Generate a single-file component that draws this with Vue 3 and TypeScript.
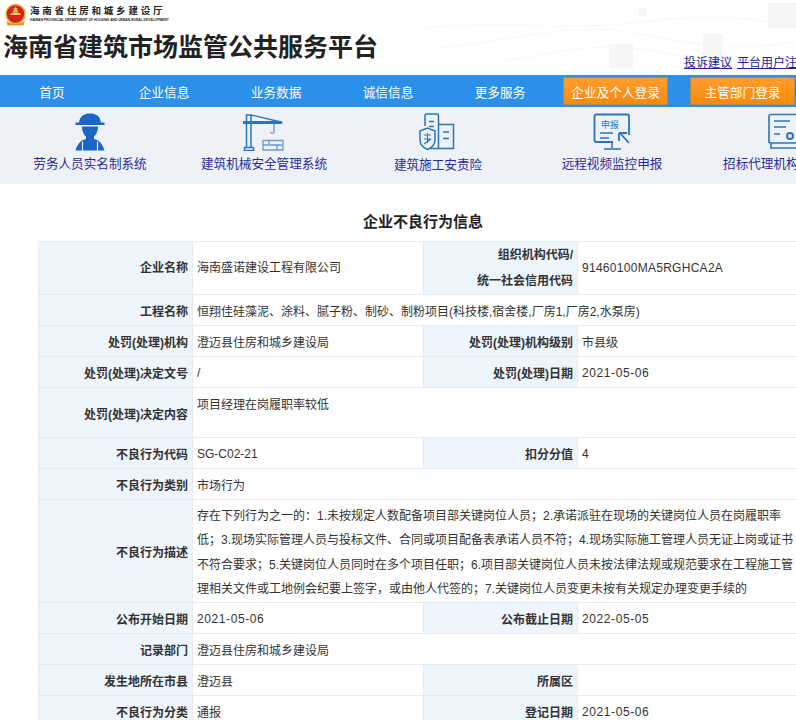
<script setup lang="ts">
interface Row {
  l1: string
  v1: string
  l2?: string
  v2?: string
  cls?: string
}
const navs = ['首页', '企业信息', '业务数据', '诚信信息', '更多服务']
const desc = '存在下列行为之一的：1.未按规定人数配备项目部关键岗位人员；2.承诺派驻在现场的关键岗位人员在岗履职率低；3.现场实际管理人员与投标文件、合同或项目配备表承诺人员不符；4.现场实际施工管理人员无证上岗或证书不符合要求；5.关键岗位人员同时在多个项目任职；6.项目部关键岗位人员未按法律法规或规范要求在工程施工管理相关文件或工地例会纪要上签字，或由他人代签的；7.关键岗位人员变更未按有关规定办理变更手续的'
const rows: Row[] = [
  { l1: '工程名称', v1: '恒翔佳硅藻泥、涂料、腻子粉、制砂、制粉项目(科技楼,宿舍楼,厂房1,厂房2,水泵房)' },
  { l1: '处罚(处理)机构', v1: '澄迈县住房和城乡建设局', l2: '处罚(处理)机构级别', v2: '市县级' },
  { l1: '处罚(处理)决定文号', v1: '/', l2: '处罚(处理)日期', v2: '2021-05-06' },
  { l1: '处罚(处理)决定内容', v1: '项目经理在岗履职率较低', cls: 'content' },
  { l1: '不良行为代码', v1: 'SG-C02-21', l2: '扣分分值', v2: '4' },
  { l1: '不良行为类别', v1: '市场行为' },
  { l1: '不良行为描述', v1: desc, cls: 'desc' },
  { l1: '公布开始日期', v1: '2021-05-06', l2: '公布截止日期', v2: '2022-05-05' },
  { l1: '记录部门', v1: '澄迈县住房和城乡建设局' },
  { l1: '发生地所在市县', v1: '澄迈县', l2: '所属区', v2: '' },
  { l1: '不良行为分类', v1: '通报', l2: '登记日期', v2: '2021-05-06' }
]
// 日期的数字比正文宽一点
const isDate = (v?: string) => /^\d{4}-\d{2}-\d{2}$/.test(v ?? '')
</script>

<template>
  <div class="page">
    <header class="top">
      <svg class="decor" width="796" height="75" viewBox="0 0 796 75">
        <g fill="#f6f6f8">
          <rect x="609" y="44" width="24" height="24" />
          <rect x="703" y="34" width="20" height="24" />
          <rect x="768" y="3" width="28" height="25" />
          <rect x="639" y="8" width="7" height="8" />
        </g>
        <g fill="none" stroke="#f7f8fa" stroke-width="1">
          <path d="M420 28C520 20 560 30 620 24S720 12 796 26" />
          <path d="M440 48C520 40 570 20 640 34S740 50 796 42" />
          <path d="M500 62C560 52 600 40 660 52S740 66 796 58" />
        </g>
      </svg>
      <div class="brand">
        <svg class="emblem" width="24" height="25" viewBox="0 0 24 25">
          <circle cx="12.5" cy="11" r="9.5" fill="#d6231c" stroke="#e6b23c" stroke-width="1.6" />
          <path d="M7 12h11l-1.2-2H8.200zM9.500 9.500h6L14.500 7.500h-4z" fill="#f2c94c" />
          <path d="M12.500 3.500l.8 1.800 1.700.2-1.300 1.100.4 1.600-1.600-.9-1.600.9.4-1.600-1.300-1.100 1.700-.2z" fill="#f6d75a" />
          <path d="M3.500 18q9 6 18 0l-1 4.500H4.500z" fill="#d89a2b" />
        </svg>
        <div class="brand-text">
          <div class="cn">海南省住房和城乡建设厅</div>
          <div class="en">HAINAN PROVINCIAL DEPARTMENT OF HOUSING AND URBAN-RURAL DEVELOPMENT</div>
        </div>
      </div>
      <div class="title-row">
        <h1>海南省建筑市场监管公共服务平台</h1>
        <div class="links">
          <a href="#">投诉建议</a>
          <a href="#">平台用户注册</a>
        </div>
      </div>
    </header>

    <nav class="nav">
      <ul>
        <li v-for="n in navs" :key="n">{{ n }}</li>
      </ul>
      <button class="login">企业及个人登录</button>
      <button class="login second">主管部门登录</button>
    </nav>

    <div class="systems">
      <div class="sys">
        <svg width="34" height="38" viewBox="0 0 34 38">
          <path d="M6 9.500C7 3 11 .5 17 .5S27 3 28 9.500h3.500v2.500H2.500V9.500z" fill="#1a66c4" />
          <path d="M9 13.500h16c0 5-2 8.500-4 10v2.500c4 1 8 3 10.500 11.500H2.500C5 29 9 27 13 26v-2.500c-2-1.500-4-5-4-10z" fill="#1a66c4" />
          <path d="M9.500 28.500v9M24.500 28.500v9" stroke="#eef2f6" stroke-width="1.200" />
        </svg>
        <span>劳务人员实名制系统</span>
      </div>
      <div class="sys">
        <svg width="42" height="38" viewBox="0 0 42 38" fill="none" stroke="#2a74c0">
          <path d="M3.500 9V34M8 9V34M1.500 34.500h9V37.500h-9zM4 2h3L6 2M3.500 9V2h4.500v7" stroke-width="1.500" />
          <path d="M8 2L38 9" stroke-width="1.300" />
          <path d="M1 9.500H38" stroke-width="3" stroke-linecap="round" />
          <path d="M31 11v7.500c0 2.500-3 2.500-3.500 .5" stroke-width="1" />
          <path d="M20 27.500h20v9.500H20zM20 32h20M26 27.500v4.500M34 32v5" stroke="#6b9bd0" stroke-width="1.300" />
        </svg>
        <span>建筑机械安全管理系统</span>
      </div>
      <div class="sys">
        <svg width="40" height="38" viewBox="0 0 40 38" fill="none" stroke="#2a74c0" stroke-width="1.500">
          <path d="M7 13V2.500Q7 1 8.500 1H19Q20.500 1 20.500 2.500V36" />
          <path d="M20.500 11.500H35.500V35.500H12M11 8.500h5M11 13.500h5M25 19h6M25 25.500h6" />
          <path d="M2 18l7.500-3 7.500 3v9c0 5-4 8-7.500 9.500C6 35 2 32 2 27z" />
          <path d="M6 22h7M6 26h7M9.500 20v10M6 31l7-5" stroke-width="1.100" />
        </svg>
        <span class="drop">建筑施工安责险</span>
      </div>
      <div class="sys">
        <svg width="38" height="38" viewBox="0 0 38 38" fill="none" stroke="#2a74c0" stroke-width="1.500">
          <path d="M20 29H3.500Q1.500 29 1.500 27V3.500Q1.500 1.500 3.500 1.500H34Q36 1.500 36 3.500V22" stroke-width="1.800" />
          <path d="M7 20h13M7 25h9M19 29v6M11 36H28" />
          <path d="M27 20L36 30M26 20v8M26 20h8" stroke-width="1.800" />
          <text x="8" y="15" class="box-text">申报</text>
        </svg>
        <span class="up">远程视频监控申报</span>
      </div>
      <div class="sys">
        <svg width="40" height="38" viewBox="0 0 40 38" fill="none" stroke="#2a74c0" stroke-width="1.600">
          <path d="M3 30V3.500Q3 1.500 5 1.500H38V30H5Q3 30 3 28M5 30v5H40" />
          <path d="M8 8H24M8 14H20M8 21H14" />
          <circle cx="24" cy="23" r="3" stroke-width="2" />
        </svg>
        <span class="up">招标代理机构管理系统</span>
      </div>
    </div>

    <main class="main">
      <h2>企业不良行为信息</h2>
      <table>
        <colgroup>
          <col class="label-col" />
          <col class="value-col" />
          <col class="label-col" />
          <col class="value-col" />
        </colgroup>
        <tbody>
          <tr class="first">
            <th>企业名称</th>
            <td>海南盛诺建设工程有限公司</td>
            <th>组织机构代码/<br />统一社会信用代码</th>
            <td class="code">91460100MA5RGHCA2A</td>
          </tr>
          <tr v-for="r in rows" :key="r.l1" :class="r.cls">
            <th>{{ r.l1 }}</th>
            <td :colspan="r.l2 ? 1 : 3" :class="{ date: isDate(r.v1) }">{{ r.v1 }}</td>
            <template v-if="r.l2">
              <th>{{ r.l2 }}</th>
              <td :class="{ date: isDate(r.v2) }">{{ r.v2 }}</td>
            </template>
          </tr>
        </tbody>
      </table>
    </main>
  </div>
</template>

<style scoped>
.page {
  width: 846px;
  font-family: "Liberation Sans", "Noto Sans CJK SC", sans-serif;
  font-size: 12px;
  color: #333;
}
.top {
  position: relative;
  width: 796px;
  height: 75px;
  overflow: visible;
}
.decor {
  position: absolute;
  top: 0;
  left: 0;
}
.brand {
  position: relative;
  display: flex;
  align-items: flex-start;
  padding: 3px 0 0 3px;
  height: 28px;
  box-sizing: border-box;
}
.brand-text {
  margin-left: 3px;
  padding-top: 2px;
}
.cn {
  font-size: 9.5px;
  line-height: 12px;
  font-weight: 700;
  letter-spacing: 2.8px;
  color: #222;
}
.en {
  font-size: 3.3px;
  line-height: 6px;
  font-weight: 700;
  white-space: nowrap;
  color: #222;
}
.title-row {
  position: relative;
  display: flex;
  justify-content: space-between;
  padding-left: 3px;
  width: 846px;
  box-sizing: border-box;
}
h1 {
  margin: 0;
  font-size: 25px;
  line-height: 38px;
  font-weight: 700;
  color: #222;
}
.links {
  padding-top: 27px;
  line-height: 16px;
  white-space: nowrap;
  margin-right: 37px;
}
.links a {
  color: #22229c;
  margin-left: 5px;
}
.nav {
  display: flex;
  align-items: center;
  height: 32px;
  width: 846px;
  background: #2b90ea;
}
.nav ul {
  display: flex;
  list-style: none;
  margin: 0 0 0 -4px;
  padding: 0;
  width: 567px;
}
.nav li {
  width: 112px;
  text-align: center;
  color: #fff;
  font-size: 12.7px;
}
.login {
  width: 105px;
  height: 28px;
  padding: 0;
  border: 1px solid #a98a55;
  background: linear-gradient(#ff9d2e, #f68a12);
  color: #fff;
  font: inherit;
  font-size: 12.7px;
}
.second {
  margin-left: 22px;
}
.systems {
  display: flex;
  height: 77px;
  width: 888px;
  padding-left: 3px;
  box-sizing: border-box;
  background: #eef2f6;
}
.sys {
  flex: 0 0 174px;
  display: flex;
  flex-direction: column;
  align-items: center;
  padding-top: 6px;
  box-sizing: border-box;
}
.sys span {
  margin-top: 3px;
  line-height: 20px;
  font-size: 12.6px;
  color: #2a2a9c;
  white-space: nowrap;
}
.sys span.drop {
  margin-top: 4px;
}
.box-text {
  font-size: 9px;
  fill: #2a74c0;
  stroke: none;
}
.main {
  width: 846px;
}
h2 {
  margin: 0;
  padding-top: 27px;
  height: 57px;
  box-sizing: border-box;
  line-height: 22px;
  text-align: center;
  font-size: 15px;
  font-weight: 700;
  color: #222;
}
table {
  margin-left: 38px;
  width: 770px;
  table-layout: fixed;
  border-collapse: collapse;
}
.label-col,
.value-col {
  width: 154px;
}
.value-col {
  width: 231px;
}
th,
td {
  height: 31px;
  padding: 1px 4px 0;
  border: 1px solid #e8ebef;
  box-sizing: border-box;
  font-size: 12px;
}
th {
  background: #eef5fc;
  text-align: right;
  font-weight: 700;
  color: #333;
}
.first th,
.first td {
  height: 53px;
  padding-top: 0;
  line-height: 26px;
}
.content th,
.content td {
  height: 50px;
}
.content td {
  vertical-align: top;
  padding-top: 5px;
  line-height: 24px;
}
.desc th,
.desc td {
  height: 103px;
}
.desc td {
  padding-top: 3px;
  line-height: 24.5px;
}
td.date {
  letter-spacing: 0.6px;
}
td.code {
  letter-spacing: 0.28px;
}
</style>

<style>
html,
body {
  overflow: hidden;
  background: #fff;
}
</style>
